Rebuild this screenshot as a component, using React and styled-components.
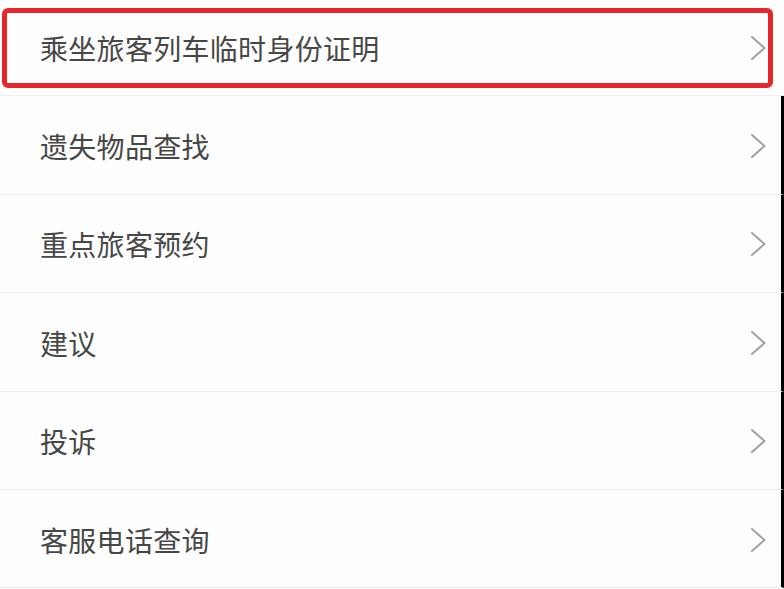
import React from 'react';
import styled, { createGlobalStyle, css } from 'styled-components';

const GlobalStyle = createGlobalStyle`
    html, body {
        margin: 0;
        padding: 0;
        background: #fdfdfd;
        width: 784px;
        height: 589px;
        overflow: hidden;
    }
    body {
        font-family: "Noto Sans CJK SC", "Noto Sans", sans-serif;
    }
`

const List = styled.ul`
    list-style: none;
    margin: -2px 0 0 0;
    padding: 0;
    width: 784px;
`

const Row = styled.li`
    position: relative;
    box-sizing: border-box;
    display: flex;
    align-items: center;
    justify-content: space-between;
    height: 98.4px;
    padding: 0 17px 0 40px;
    background-color: #fefefe;
    border-bottom: 1.5px solid #efefef;
    ${props => props.edge && css`
        border-right: 3px solid #000;
        padding-right: 14px;
    `}
`

const Label = styled.span`
    font-size: 28px;
    letter-spacing: 0.3px;
    color: #474747;
    line-height: 1;
    margin-top: 2px;
`

const Chevron = styled.svg`
    width: 17px;
    height: 26px;
    flex-shrink: 0;
    margin-top: 2px;
`

const Highlight = styled.div`
    position: absolute;
    left: 2px;
    top: 10px;
    width: 771px;
    height: 80px;
    box-sizing: border-box;
    border: 5.5px solid #e5262a;
    border-radius: 6px;
    pointer-events: none;
`

const items = [
    '乘坐旅客列车临时身份证明',
    '遗失物品查找',
    '重点旅客预约',
    '建议',
    '投诉',
    '客服电话查询',
];

function Arrow() {
    return (
        <Chevron viewBox="0 0 17 26">
            <polyline points="2,2 14.5,13 2,24" fill="none" stroke="#a0a0a0" strokeWidth="2" strokeLinecap="round" strokeLinejoin="round" />
        </Chevron>
    );
}

export default function App() {
    return (
        <>
            <GlobalStyle />
            <List>
                {items.map((text, i) => (
                    <Row key={text} edge={i > 0}>
                        <Label>{text}</Label>
                        <Arrow />
                        {i === 0 && <Highlight />}
                    </Row>
                ))}
            </List>
        </>
    );
}
